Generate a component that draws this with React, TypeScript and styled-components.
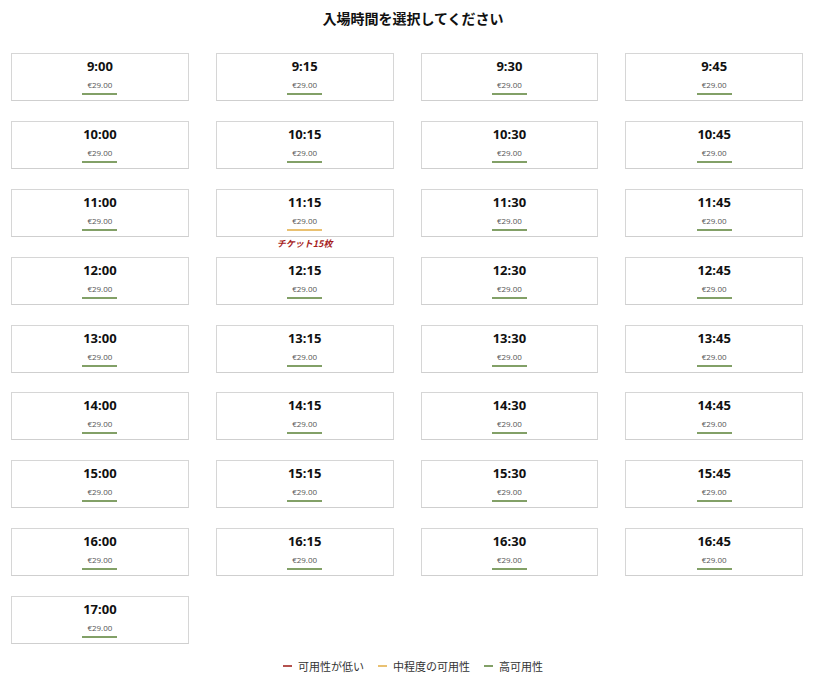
import styled, { createGlobalStyle } from "styled-components";

type Level = "low" | "mid" | "high";

interface Slot {
  time: string;
  price: string;
  level: Level;
  note?: string;
}

const levelColor: Record<Level, string> = {
  low: "#b4524e",
  mid: "#e9c172",
  high: "#82a067",
};

const hours = [9, 10, 11, 12, 13, 14, 15, 16];
const slots: Slot[] = [];
hours.forEach((h) => {
  ["00", "15", "30", "45"].forEach((m) => {
    const time = `${h}:${m}`;
    slots.push({
      time,
      price: "€29.00",
      level: time === "11:15" ? "mid" : "high",
      note: time === "11:15" ? "チケット15枚" : undefined,
    });
  });
});
slots.push({ time: "17:00", price: "€29.00", level: "high" });

const GlobalStyle = createGlobalStyle`
  body {
    margin: 0;
    background: #ffffff;
    font-family: "Noto Sans", "Noto Sans CJK JP", sans-serif;
  }
`;

const Page = styled.div`
  width: 826px;
  padding-top: 9px;
`;

const Title = styled.h2`
  margin: 0;
  text-align: center;
  font-size: 14px;
  line-height: 18px;
  font-weight: 700;
  color: #111;
  font-family: "Noto Sans CJK JP", sans-serif;
`;

const Grid = styled.div`
  margin: 26px 0 0 11px;
  width: 792px;
  display: grid;
  grid-template-columns: repeat(4, 1fr);
  column-gap: 27px;
  row-gap: 19.875px;
`;

const Cell = styled.div`
  position: relative;
`;

const Card = styled.button`
  box-sizing: border-box;
  width: 100%;
  height: 48px;
  padding: 4px 0 0;
  margin: 0;
  border: 1px solid #d6d6d6;
  border-bottom-color: #cfcfcf;
  background: #fff;
  display: flex;
  flex-direction: column;
  align-items: center;
  cursor: pointer;
`;

const Time = styled.div`
  font-family: "Noto Sans", sans-serif;
  font-weight: 700;
  font-size: 13px;
  line-height: 16px;
  color: #111;
`;

const Price = styled.div`
  margin-top: 5px;
  font-family: "Open Sans", sans-serif;
  font-size: 8px;
  line-height: 12px;
  color: #555;
`;

const Bar = styled.div<{ $level: Level }>`
  margin-top: 2px;
  width: 35px;
  height: 2px;
  background: ${(p) => levelColor[p.$level]};
`;

const Note = styled.div`
  position: absolute;
  left: 0;
  right: 0;
  top: 49px;
  text-align: center;
  font-family: "Noto Sans CJK JP", sans-serif;
  font-size: 9px;
  line-height: 12px;
  font-weight: 700;
  font-style: italic;
  color: #a61d1d;
`;

const Legend = styled.div`
  margin-top: 14px;
  display: flex;
  justify-content: center;
  gap: 14px;
`;

const LegendItem = styled.div`
  display: flex;
  align-items: center;
  gap: 6px;
  font-family: "Noto Sans CJK JP", sans-serif;
  font-size: 11px;
  line-height: 16px;
  color: #333;
`;

const Dash = styled.span<{ $level: Level }>`
  display: inline-block;
  width: 9px;
  height: 2px;
  background: ${(p) => levelColor[p.$level]};
`;

const legend: { level: Level; label: string }[] = [
  { level: "low", label: "可用性が低い" },
  { level: "mid", label: "中程度の可用性" },
  { level: "high", label: "高可用性" },
];

export default function App() {
  return (
    <Page>
      <GlobalStyle />
      <Title>入場時間を選択してください</Title>
      <Grid>
        {slots.map((s) => (
          <Cell key={s.time}>
            <Card>
              <Time>{s.time}</Time>
              <Price>{s.price}</Price>
              <Bar $level={s.level} />
            </Card>
            {s.note && <Note>{s.note}</Note>}
          </Cell>
        ))}
      </Grid>
      <Legend>
        {legend.map((l) => (
          <LegendItem key={l.level}>
            <Dash $level={l.level} />
            {l.label}
          </LegendItem>
        ))}
      </Legend>
    </Page>
  );
}
